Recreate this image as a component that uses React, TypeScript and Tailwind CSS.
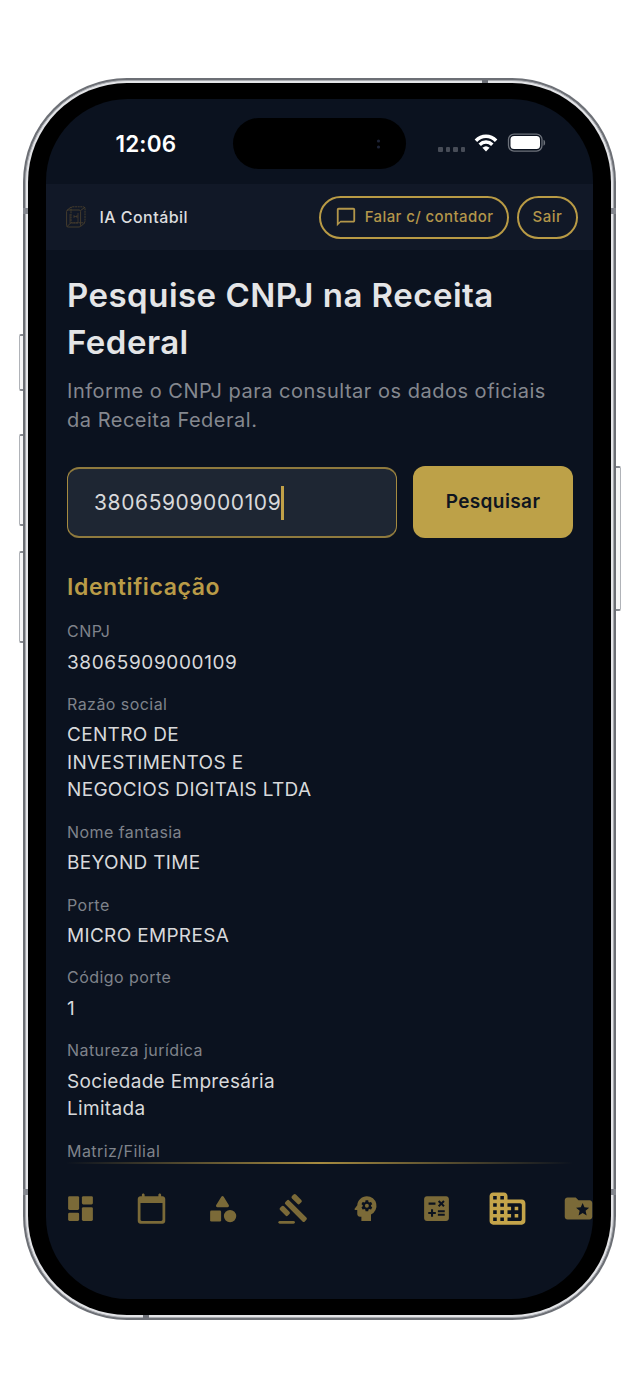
import type { ReactNode } from "react";
import { MdCalculate, MdChatBubbleOutline, MdFolderSpecial, MdPsychology } from "react-icons/md";

type Field = {
  label: string;
  lines: string[];
  numeric?: boolean;
};

const fields: Field[] = [
  { label: "CNPJ", lines: ["38065909000109"], numeric: true },
  {
    label: "Razão social",
    lines: ["CENTRO DE", "INVESTIMENTOS E", "NEGOCIOS DIGITAIS LTDA"],
  },
  { label: "Nome fantasia", lines: ["BEYOND TIME"] },
  { label: "Porte", lines: ["MICRO EMPRESA"] },
  { label: "Código porte", lines: ["1"], numeric: true },
  { label: "Natureza jurídica", lines: ["Sociedade Empresária", "Limitada"] },
  { label: "Matriz/Filial", lines: [] },
];

function Glyph({ size = 33, children }: { size?: number; children: ReactNode }) {
  return (
    <svg width={size} height={size} viewBox="0 0 24 24" fill="currentColor">
      {children}
    </svg>
  );
}

function DashboardIcon() {
  return (
    <Glyph>
      <rect x="3" y="3" width="8" height="10" rx="1" />
      <rect x="3" y="15" width="8" height="6" rx="1" />
      <rect x="13" y="11" width="8" height="10" rx="1" />
      <rect x="13" y="3" width="8" height="6" rx="1" />
    </Glyph>
  );
}

function CalendarIcon() {
  return (
    <Glyph>
      <path d="M20 3h-1V2c0-.55-.45-1-1-1s-1 .45-1 1v1H7V2c0-.55-.45-1-1-1s-1 .45-1 1v1H4c-1.1 0-2 .9-2 2v16c0 1.1.9 2 2 2h16c1.1 0 2-.9 2-2V5c0-1.1-.9-2-2-2zm-1 18H5c-.55 0-1-.45-1-1V8h16v12c0 .55-.45 1-1 1z" />
    </Glyph>
  );
}

function CategoryIcon() {
  return (
    <Glyph>
      <path d="M11.15 3.4L7.43 9.48c-.41.66.07 1.52.85 1.52h7.43c.78 0 1.26-.86.85-1.52L12.85 3.4c-.39-.64-1.31-.64-1.7 0z" />
      <circle cx="17.5" cy="17.5" r="4.5" />
      <rect x="3" y="13.5" width="8" height="8" rx="1" />
    </Glyph>
  );
}

function GavelIcon() {
  return (
    <Glyph>
      <rect x="1" y="21" width="12" height="2" rx="1" />
      <rect x="3.74" y="11.73" width="20" height="4" rx="1.2" transform="rotate(45 13.74 13.73)" />
      <rect x="10.3" y="3.24" width="8" height="4" rx="1.2" transform="rotate(45 14.3 5.24)" />
      <rect x="1.64" y="11.73" width="8" height="4" rx="1.2" transform="rotate(45 5.64 13.73)" />
    </Glyph>
  );
}

function BusinessIcon() {
  return (
    <Glyph size={43}>
      <path d="M12 7V5c0-1.1-.9-2-2-2H4c-1.1 0-2 .9-2 2v14c0 1.1.9 2 2 2h16c1.1 0 2-.9 2-2V9c0-1.1-.9-2-2-2h-8zM6 19H4v-2h2v2zm0-4H4v-2h2v2zm0-4H4V9h2v2zm0-4H4V5h2v2zm4 12H8v-2h2v2zm0-4H8v-2h2v2zm0-4H8V9h2v2zm0-4H8V5h2v2zm9 12h-7v-2h2v-2h-2v-2h2v-2h-2V9h7c.55 0 1 .45 1 1v8c0 .55-.45 1-1 1zm-1-8h-2v2h2v-2zm0 4h-2v2h2v-2z" />
    </Glyph>
  );
}

function CubeLogo() {
  return (
    <svg width="20" height="22" viewBox="0 0 20 22" fill="none" stroke="#4b412e" strokeWidth="0.9">
      <rect x="0.6" y="4" width="14" height="17" rx="1.5" />
      <rect x="5" y="0.8" width="14" height="16" rx="1.5" strokeDasharray="2 0.6" />
      <path d="M0.8 4.5 5 1M14.6 4.5 19 1.2M14.6 20.5 19 16.6M1 20.6 5 16.6" />
      <path d="M4 8v9h8V7M8 9v3M11 9v3M8 10.5h3" strokeWidth="0.7" />
    </svg>
  );
}

function StatusBar() {
  return (
    <div className="flex h-[85px] shrink-0 items-start">
      <div className="mt-[29px] w-[118px] pl-[69.5px] text-[22.5px] leading-8 font-semibold tracking-[0.15px] whitespace-nowrap text-white">
        12:06
      </div>
      <div className="mt-[19px] ml-[69px] flex h-[51px] w-[173px] items-center justify-end rounded-full bg-black pr-[25px]">
        <svg width="5" height="10" viewBox="0 0 5 10" fill="#1d2336">
          <circle cx="2.5" cy="2" r="1.6" />
          <circle cx="2.5" cy="8" r="1.6" />
        </svg>
      </div>
      <div className="mt-[34px] ml-[32px] flex items-start">
        <div className="mt-[14px] flex gap-[3px]">
          {[0, 1, 2, 3].map((dot) => (
            <span key={dot} className="size-[4.5px] rounded-[1px] bg-[#474c57]" />
          ))}
        </div>
        <svg className="ml-[9px]" width="24" height="19" viewBox="0 0 24 19" fill="none" stroke="#fff" strokeWidth="3.5">
          <path d="M1.9 7.7C7.6 1.9 16.4 1.9 22.1 7.7" />
          <path d="M5.7 11.7C9.3 8.2 14.7 8.2 18.3 11.7" />
          <path d="M12 18.4 8.4 14.8Q12 11.6 15.6 14.8Z" fill="#fff" stroke="none" />
        </svg>
        <svg className="ml-[9px]" width="39" height="20" viewBox="0 0 39 20">
          <rect x="1.5" y="1.1" width="33.5" height="17" rx="5.5" fill="none" stroke="#6d727b" strokeWidth="1.3" />
          <rect x="3.5" y="3.1" width="29.5" height="13" rx="3.6" fill="#fff" />
          <path d="M36.5 6.8c2.2.6 2.2 5.4 0 6z" fill="#6d727b" />
        </svg>
      </div>
    </div>
  );
}

function TopBar() {
  return (
    <header className="flex h-[66px] shrink-0 items-center bg-[#111827] pr-[15px] pl-5">
      <CubeLogo />
      <span className="ml-[13.5px] text-base font-medium tracking-[0.45px] text-[#dcdddf]">IA Contábil</span>
      <button className="ml-auto flex h-[43px] w-[190px] items-center justify-center rounded-full border-2 border-[#b89a45] text-[15px] font-medium tracking-[0.4px] whitespace-nowrap text-[#b3964a]">
        <MdChatBubbleOutline className="mr-2 shrink-0" size={22} />
        Falar c/ contador
      </button>
      <button className="ml-2 h-[43px] w-[61px] rounded-full border-2 border-[#b89a45] text-[15px] font-medium tracking-[0.5px] text-[#b3964a]">
        Sair
      </button>
    </header>
  );
}

function FieldBlock({ label, lines, numeric }: Field) {
  return (
    <div className="mb-[16.4px]">
      <div className="text-base leading-6 tracking-[0.45px] text-[#7f838b]">{label}</div>
      <div
        className={`mt-[5.2px] text-[19px] leading-[27.3px] text-[#d8d9db] ${
          numeric ? "tracking-[0.62px]" : "tracking-[0.32px]"
        }`}
      >
        {lines.map((line) => (
          <div key={line} className="whitespace-nowrap">
            {line}
          </div>
        ))}
      </div>
    </div>
  );
}

function BottomNav() {
  return (
    <nav className="h-[137px] shrink-0">
      <div className="mx-5 h-[2px] bg-gradient-to-r from-transparent via-[#a68b40] to-transparent" />
      <div className="-ml-[1.2px] flex h-[88px] w-[580px] items-center text-[#7b6a38]">
        {[
          <DashboardIcon />,
          <CalendarIcon />,
          <CategoryIcon />,
          <GavelIcon />,
          <MdPsychology size={33} />,
          <MdCalculate size={33} />,
          <BusinessIcon />,
          <MdFolderSpecial size={33} />,
        ].map((icon, i) => (
          <div
            key={i}
            className={`flex w-[71.2px] shrink-0 items-center justify-center ${i === 6 ? "text-[#c4a44a]" : ""}`}
          >
            {icon}
          </div>
        ))}
      </div>
    </nav>
  );
}

export default function App() {
  return (
    <div className="relative h-[1385px] w-[640px] overflow-hidden bg-white px-[23px] pt-[78px] font-['Inter','Liberation_Sans',sans-serif]">
      {/* Side buttons */}
      <div className="absolute top-[334px] left-[19px] h-[57px] w-[6px] rounded-l-[2px] border border-y-2 border-[#b0b3b8] border-y-[#85888f] bg-[#f6f6f7]" />
      <div className="absolute top-[434px] left-[19px] h-[92px] w-[6px] rounded-l-[2px] border border-y-2 border-[#b0b3b8] border-y-[#85888f] bg-[#f6f6f7]" />
      <div className="absolute top-[551px] left-[19px] h-[92px] w-[6px] rounded-l-[2px] border border-y-2 border-[#b0b3b8] border-y-[#85888f] bg-[#f6f6f7]" />
      <div className="absolute top-[466px] left-[615px] h-[145px] w-[6px] rounded-r-[2px] border border-y-2 border-[#b0b3b8] border-y-[#85888f] bg-[#f6f6f7]" />

      {/* Phone frame */}
      <div className="relative h-[1242px] w-[593px] rounded-[104px] bg-[#6c6f75] p-[2px]">
        <div className="h-full rounded-[102px] border border-[#a9abb0] bg-[#e4e5e8] p-[2px]">
          <div className="h-full rounded-[99px] bg-black p-[1px]">
            <div className="h-full px-[17px] py-[15px]">
              <div className="flex h-full w-[547px] flex-col overflow-hidden rounded-[82px] bg-[#0b121f]">
                <StatusBar />
                <TopBar />

                <main className="min-h-0 flex-1 overflow-hidden pt-[22px] pl-[21px]">
                  <h1 className="text-[33px] leading-[46.5px] font-[560] tracking-[0.48px] whitespace-nowrap text-[#e4e5e7]">
                    Pesquise CNPJ na Receita
                    <br />
                    Federal
                  </h1>
                  <p className="mt-3 text-xl leading-[29px] tracking-[0.51px] whitespace-nowrap text-[#85888f]">
                    Informe o CNPJ para consultar os dados oficiais
                    <br />
                    da Receita Federal.
                  </p>

                  <div className="mt-[31px] flex items-center">
                    <div className="flex h-[71px] w-[330px] items-center rounded-xl border border-y-2 border-[#a68b40] border-y-[#8f7a3e] bg-[#1e2633] pt-[1px] pl-[26px] text-[21px] tracking-[0.6px] text-[#d8d9db]">
                      38065909000109
                      <span className="h-[34px] w-[3px] bg-[#c0a048]" />
                    </div>
                    <button className="ml-[16px] h-[72px] w-[160px] rounded-xl bg-[#bda148] text-[19px] font-[560] tracking-[0.4px] text-[#0f1520]">
                      Pesquisar
                    </button>
                  </div>

                  <h2 className="mt-[33px] mb-[16.4px] text-[23px] leading-8 font-[560] tracking-[0.6px] text-[#b99b47]">
                    Identificação
                  </h2>
                  {fields.map((field) => (
                    <FieldBlock key={field.label} {...field} />
                  ))}
                </main>

                <BottomNav />
              </div>
            </div>
          </div>
        </div>

        {/* Antenna bands */}
        <span className="absolute top-[130px] left-0 h-[6px] w-[5px] bg-[#85888f]" />
        <span className="absolute top-[130px] right-0 h-[6px] w-[5px] bg-[#85888f]" />
        <span className="absolute top-[1111px] left-0 h-[6px] w-[5px] bg-[#85888f]" />
        <span className="absolute top-[1111px] right-0 h-[6px] w-[5px] bg-[#85888f]" />
        <span className="absolute top-0 left-[459px] h-[5px] w-[6px] bg-[#6d7077]" />
        <span className="absolute bottom-0 left-[120px] h-[5px] w-[6px] bg-[#6d7077]" />
      </div>
    </div>
  );
}
